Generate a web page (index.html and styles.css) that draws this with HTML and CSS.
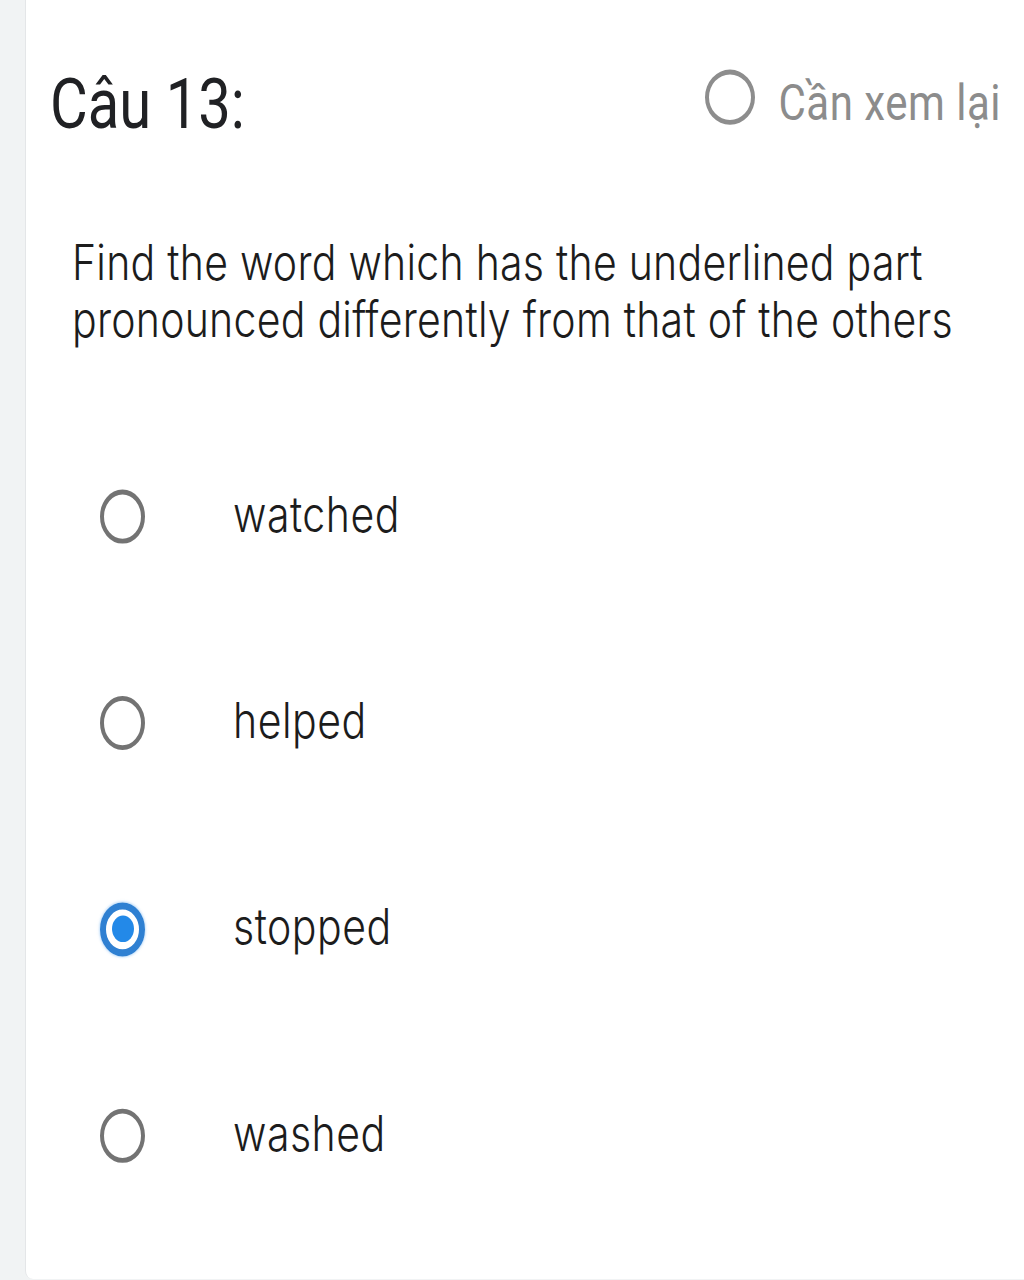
FILE: index.html
```html
<!DOCTYPE html>
<html lang="vi">
<head>
<meta charset="utf-8">
<title>Câu 13</title>
<link rel="stylesheet" href="styles.css">
</head>
<body>
<div class="page">
  <div class="card">
    <div class="content">
      <div class="header">
        <h1 class="title">Câu 13:</h1>
        <div class="review">
          <span class="review-circle"></span>
          <span class="review-label">Cần xem lại</span>
        </div>
      </div>
      <p class="question">Find the word which has the underlined part<br>pronounced differently from that of the others</p>
      <div class="options">
        <div class="option"><span class="radio"></span><span class="option-label">watched</span></div>
        <div class="option"><span class="radio"></span><span class="option-label">helped</span></div>
        <div class="option"><span class="radio radio-checked"><span class="radio-dot"></span></span><span class="option-label">stopped</span></div>
        <div class="option"><span class="radio"></span><span class="option-label">washed</span></div>
      </div>
    </div>
  </div>
</div>
</body>
</html>
```
FILE: styles.css
```css
* { box-sizing: border-box; }
html, body { margin: 0; padding: 0; }
body {
  background: #f1f3f4;
  font-family: Roboto, "Liberation Sans", Arial, sans-serif;
  color: #202124;
}
.page {
  display: flex;
  padding-left: 25px;
  height: 1280px;
  overflow: hidden;
}
.card {
  flex: 1;
  height: 1279px;
  background: #ffffff;
  border-left: 1px solid #e4e6e8;
  border-radius: 0 0 0 8px;
}
.content {
  transform: scaleY(1.2);
  transform-origin: 0 0;
  padding: 53px 23px 0 24px;
}
.header {
  display: flex;
  justify-content: space-between;
  align-items: flex-start;
}
.title {
  margin: 0;
  font-size: 58px;
  font-weight: 400;
  line-height: 68px;
  color: #202124;
}
.review {
  display: flex;
  align-items: center;
  gap: 23px;
  margin-top: 9px;
  height: 48px;
}
.review-circle {
  flex-shrink: 0;
  width: 50px;
  height: 46px;
  border: 4px solid #8d8d8d;
  border-radius: 50%;
  margin-bottom: 10px;
}
.review-label {
  font-size: 42px;
  letter-spacing: 0.5px;
  line-height: 48px;
  color: #8c8c8c;
}
.question {
  margin: 73px 0 0 22px;
  font-family: Inter, Roboto, "Liberation Sans", sans-serif;
  font-size: 41px;
  font-weight: 350;
  letter-spacing: 0.25px;
  line-height: 48px;
  color: #1c1c1c;
}
.options {
  display: flex;
  flex-direction: column;
  gap: 124px;
  margin-top: 114px;
}
.option {
  display: flex;
  align-items: center;
  height: 48px;
  padding-left: 50px;
}
.radio {
  width: 45px;
  height: 45px;
  border: 4px solid #737373;
  border-radius: 50%;
  margin-right: 88px;
  flex-shrink: 0;
  margin-top: 4px;
  display: flex;
  align-items: center;
  justify-content: center;
}
.radio-checked {
  border: 6px solid #2f80d2;
  box-shadow: 0 0 2px 1px rgba(90, 165, 240, 0.35);
}
.radio-dot {
  width: 22px;
  height: 22px;
  border-radius: 50%;
  background: #2389e8;
}
.option-label {
  font-family: Inter, Roboto, "Liberation Sans", sans-serif;
  font-size: 41px;
  font-weight: 350;
  letter-spacing: 0.5px;
  line-height: 48px;
  color: #1c1c1c;
}
```
